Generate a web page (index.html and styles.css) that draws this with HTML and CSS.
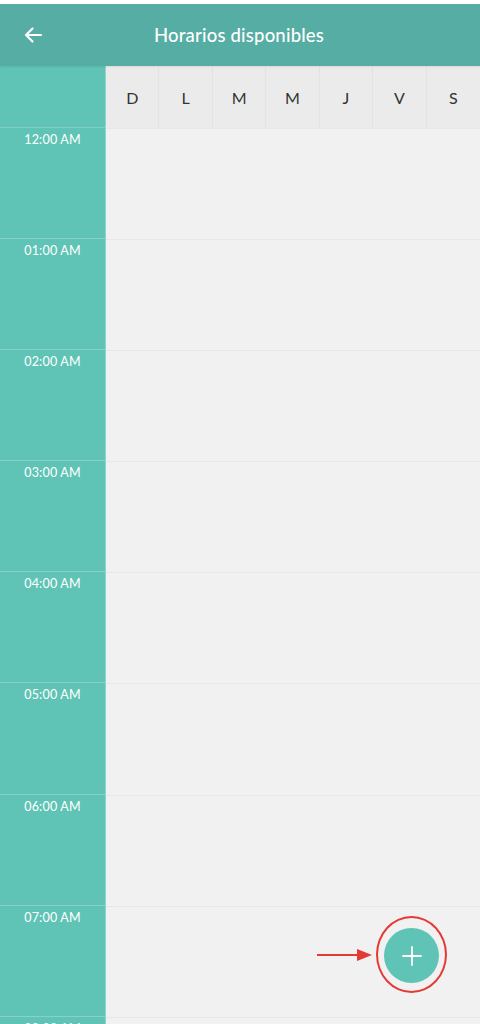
FILE: index.html
```html
<!DOCTYPE html>
<html lang="es">
<head>
<meta charset="utf-8">
<title>Horarios disponibles</title>
<link rel="stylesheet" href="styles.css">
</head>
<body>
<div class="screen">
  <div class="topstrip"></div>
  <header class="appbar">
    <button class="back" aria-label="Volver">
      <svg width="20" height="20" viewBox="0 0 20 20"><path d="M18 10H3M9.5 3.5L3 10l6.5 6.5" fill="none" stroke="#fff" stroke-width="2.2" stroke-linecap="round" stroke-linejoin="round"/></svg>
    </button>
    <h1 class="title">Horarios disponibles</h1>
    <span class="spacer"></span>
  </header>
  <div class="calendar">
    <div class="timecol">
      <div class="corner"></div>
      <div class="hour"><span>12:00 AM</span></div>
      <div class="hour"><span>01:00 AM</span></div>
      <div class="hour"><span>02:00 AM</span></div>
      <div class="hour"><span>03:00 AM</span></div>
      <div class="hour"><span>04:00 AM</span></div>
      <div class="hour"><span>05:00 AM</span></div>
      <div class="hour"><span>06:00 AM</span></div>
      <div class="hour"><span>07:00 AM</span></div>
      <div class="hour"><span>08:00 AM</span></div>
    </div>
    <div class="main">
      <div class="days">
        <div class="day">D</div>
        <div class="day">L</div>
        <div class="day">M</div>
        <div class="day">M</div>
        <div class="day">J</div>
        <div class="day">V</div>
        <div class="day">S</div>
      </div>
      <div class="slot"></div>
      <div class="slot"></div>
      <div class="slot"></div>
      <div class="slot"></div>
      <div class="slot"></div>
      <div class="slot"></div>
      <div class="slot"></div>
      <div class="slot"></div>
      <div class="slot"></div>
    </div>
  </div>
  <svg class="arrow" width="60" height="16" viewBox="0 0 60 16"><path d="M1 8H44" stroke="#e53935" stroke-width="2"/><path d="M41 2L56 8L41 14Z" fill="#e53935"/></svg>
  <div class="ring"></div>
  <button class="fab" aria-label="Agregar">
    <svg width="20" height="20" viewBox="0 0 20 20"><path d="M10 1V19M1 10H19" stroke="#fff" stroke-width="1.8" stroke-linecap="round"/></svg>
  </button>
</div>
</body>
</html>
```
FILE: styles.css
```css
* { box-sizing: border-box; }
html, body { margin: 0; padding: 0; }
body {
  background: #f1f1f1;
  font-family: "Lato", "Open Sans", sans-serif;
  width: 480px;
  height: 1024px;
  overflow: hidden;
}
.screen { position: relative; width: 480px; height: 1024px; overflow: hidden; }
.topstrip { height: 4px; background: #ffffff; }
.appbar {
  height: 62px;
  background: #55ada3;
  display: flex;
  align-items: center;
  padding: 0 12px 0 22px;
  box-shadow: 0 1px 2px rgba(0,0,0,0.08);
  position: relative;
  z-index: 1;
}
.back {
  border: 0; background: none; padding: 0; width: 22px; height: 22px;
  display: flex; align-items: center; justify-content: center;
}
.title {
  flex: 1;
  margin: 0;
  text-align: center;
  color: #ffffff;
  font-weight: 500;
  font-size: 18.5px;
  letter-spacing: 0.2px;
  padding-right: 34px;
}
.spacer { width: 0; }
.calendar { display: flex; }
.timecol {
  width: 106px;
  background: #5fc4b5;
  border-right: 1px solid #8ed6cb;
  flex: none;
}
.corner { height: 62px; border-bottom: 1px solid #7fd0c4; }
.hour {
  height: 111.1px;
  border-bottom: 1px solid #86d2c7;
  text-align: center;
  padding-top: 4px;
  color: #ffffff;
  font-size: 12.5px;
  letter-spacing: 0.2px;
}
.main { flex: 1; }
.days {
  height: 62px;
  display: grid;
  grid-template-columns: repeat(7, 1fr);
  background: #ebebeb;
}
.day {
  display: flex; align-items: center; justify-content: center;
  font-size: 16px;
  color: #333;
  border-right: 1px solid #e3e3e3;
}
.day:last-child { border-right: 0; }
.slot { height: 111.1px; border-top: 1px solid #e3e9e7; }
.slot:first-of-type { border-top: 0; }
.arrow { position: absolute; left: 316px; top: 947px; }
.ring {
  position: absolute;
  left: 376px; top: 916px;
  width: 71px; height: 77px;
  border: 2px solid #e53935;
  border-radius: 50%;
}
.fab {
  position: absolute;
  left: 384px; top: 928px;
  width: 55px; height: 55px;
  border-radius: 50%;
  border: 0;
  background: #5fc4b5;
  display: flex; align-items: center; justify-content: center;
  padding: 0;
}
```
